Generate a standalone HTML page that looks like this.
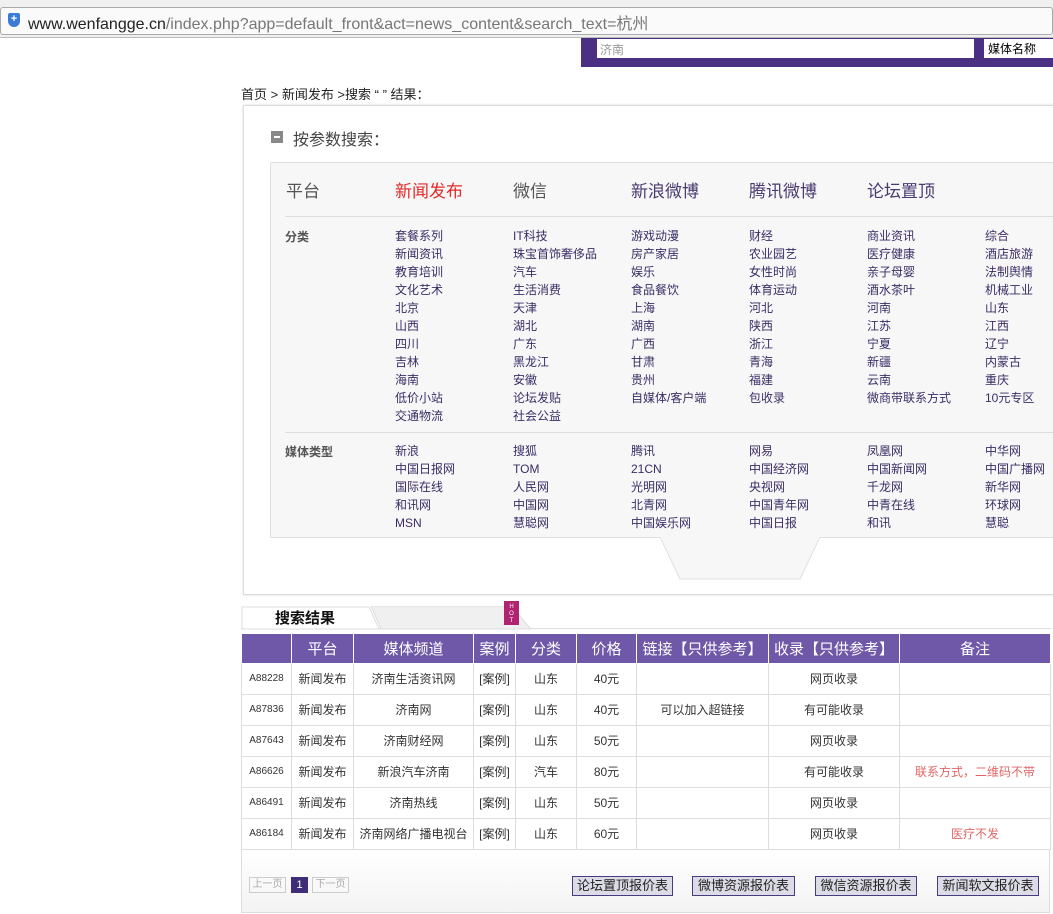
<!DOCTYPE html>
<html><head><meta charset="utf-8"><style>
*{margin:0;padding:0;box-sizing:border-box}
body{width:1053px;height:914px;overflow:hidden;background:#fff;font-family:"Liberation Sans","Noto Sans CJK SC",sans-serif;font-size:12px;color:#333;position:relative}
.a{position:absolute;white-space:nowrap}
.c{color:#3a2d66;font-size:12px}
table{border-collapse:collapse;position:absolute;left:241px;top:634px;width:809px;table-layout:fixed}
td,th{border:1px solid #ddd;text-align:center;font-weight:normal;height:31px;font-size:12px;color:#333;vertical-align:middle}
th{background:#6f58a8;color:#fff;font-size:15px;height:29px;border-color:#fff;border-top:none}
td.r{color:#e06666}
.btn{position:absolute;top:876px;height:20px;border:1px solid #4a3b80;background:#dcdce6;font-size:13px;text-align:center;line-height:18px;color:#222}
</style></head><body>
<div class="a" style="left:0;top:0;width:1053px;height:38px;background:#f0f0f0;border-bottom:1px solid #bbb"></div>
<div class="a" style="left:0;top:7px;width:1053px;height:28px;background:#fafafa;border:1px solid #aaa;border-radius:3px"></div>
<div class="a" style="left:8px;top:13px;width:12px;height:14px;background:#3a7bd5;border-radius:2px 2px 6px 6px;color:#fff;font-size:11px;line-height:13px;text-align:center;font-weight:bold">+</div>
<div class="a" style="left:28px;top:10px;font-size:16px;color:#222">www.wenfangge.cn<span style="color:#777">/index.php?app=default_front&amp;act=news_content&amp;search_text=杭州</span></div>
<div class="a" style="left:581px;top:38px;width:472px;height:29px;background:#4a2f82"></div>
<div class="a" style="left:597px;top:39px;width:377px;height:19px;background:#fff;color:#999;font-size:12px;padding:2px 3px">济南</div>
<div class="a" style="left:984px;top:39px;width:69px;height:19px;background:#fff;color:#000;font-size:12px;padding:1px 4px">媒体名称</div>
<div class="a" style="left:241px;top:84px;font-size:13px;color:#222">首页 &gt; 新闻发布 &gt;搜索 “ ” 结果：</div>
<div class="a" style="left:243px;top:105px;width:812px;height:490px;border:1px solid #ddd;box-shadow:0 0 3px #ddd"></div>
<div class="a" style="left:271px;top:131px;width:12px;height:12px;background:#888"><div style="margin:5px 3px;width:6px;height:2px;background:#fff"></div></div>
<div class="a" style="left:293px;top:126px;font-size:16px;color:#444">按参数搜索：</div>
<div class="a" style="left:270px;top:162px;width:785px;height:376px;background:#f7f7f7;border:1px solid #e0e0e0;border-right:none"></div>
<svg class="a" style="left:660px;top:537px" width="160" height="45"><polygon points="0,0 160,0 140,42 20,42" fill="#f7f7f7" stroke="#e0e0e0"/><rect x="1" y="0" width="158" height="2" fill="#f7f7f7"/></svg>
<div class="a" style="left:286px;top:177px;font-size:17px;color:#555">平台</div>
<div class="a" style="left:395px;top:177px;font-size:17px;color:#e02a2a">新闻发布</div>
<div class="a" style="left:513px;top:177px;font-size:17px;color:#555">微信</div>
<div class="a" style="left:631px;top:177px;font-size:17px;color:#4a3a70">新浪微博</div>
<div class="a" style="left:749px;top:177px;font-size:17px;color:#4a3a70">腾讯微博</div>
<div class="a" style="left:867px;top:177px;font-size:17px;color:#4a3a70">论坛置顶</div>
<div class="a" style="left:285px;top:216px;width:768px;height:1px;background:#ddd"></div>
<div class="a" style="left:285px;top:432px;width:768px;height:1px;background:#ddd"></div>
<div class="a" style="left:285px;top:228px;font-weight:bold;color:#555">分类</div>
<div class="a" style="left:285px;top:443px;font-weight:bold;color:#555">媒体类型</div>
<div class="a c" style="left:395px;top:227px;line-height:18px;white-space:pre">套餐系列
新闻资讯
教育培训
文化艺术
北京
山西
四川
吉林
海南
低价小站
交通物流</div>
<div class="a c" style="left:513px;top:227px;line-height:18px;white-space:pre">IT科技
珠宝首饰奢侈品
汽车
生活消费
天津
湖北
广东
黑龙江
安徽
论坛发贴
社会公益</div>
<div class="a c" style="left:631px;top:227px;line-height:18px;white-space:pre">游戏动漫
房产家居
娱乐
食品餐饮
上海
湖南
广西
甘肃
贵州
自媒体/客户端</div>
<div class="a c" style="left:749px;top:227px;line-height:18px;white-space:pre">财经
农业园艺
女性时尚
体育运动
河北
陕西
浙江
青海
福建
包收录</div>
<div class="a c" style="left:867px;top:227px;line-height:18px;white-space:pre">商业资讯
医疗健康
亲子母婴
酒水茶叶
河南
江苏
宁夏
新疆
云南
微商带联系方式</div>
<div class="a c" style="left:985px;top:227px;line-height:18px;white-space:pre">综合
酒店旅游
法制舆情
机械工业
山东
江西
辽宁
内蒙古
重庆
10元专区</div>
<div class="a c" style="left:395px;top:442px;line-height:18px;white-space:pre">新浪
中国日报网
国际在线
和讯网
MSN</div>
<div class="a c" style="left:513px;top:442px;line-height:18px;white-space:pre">搜狐
TOM
人民网
中国网
慧聪网</div>
<div class="a c" style="left:631px;top:442px;line-height:18px;white-space:pre">腾讯
21CN
光明网
北青网
中国娱乐网</div>
<div class="a c" style="left:749px;top:442px;line-height:18px;white-space:pre">网易
中国经济网
央视网
中国青年网
中国日报</div>
<div class="a c" style="left:867px;top:442px;line-height:18px;white-space:pre">凤凰网
中国新闻网
千龙网
中青在线
和讯</div>
<div class="a c" style="left:985px;top:442px;line-height:18px;white-space:pre">中华网
中国广播网
新华网
环球网
慧聪</div>
<div class="a" style="left:241px;top:628px;width:810px;height:1px;background:#ddd"></div>
<svg class="a" style="left:241px;top:606px" width="290" height="24"><polygon points="130,0 270,0 290,23 140,23" fill="#f0f0f0" stroke="#ddd"/><polygon points="1,23 1,1 128,1 138,23" fill="#fff" stroke="#ddd"/></svg>
<div class="a" style="left:275px;top:607px;font-size:15px;font-weight:bold;color:#111">搜索结果</div>
<div class="a" style="left:504px;top:601px;width:15px;height:24px;background:#b0236e;color:#fff;font-size:6px;text-align:center;line-height:7px;padding-top:3px">H<br>O<br>T</div>
<table>
<colgroup><col style="width:50px"><col style="width:62px"><col style="width:120px"><col style="width:42px"><col style="width:61px"><col style="width:60px"><col style="width:132px"><col style="width:131px"><col style="width:151px"></colgroup>
<tr><th></th><th>平台</th><th>媒体频道</th><th>案例</th><th>分类</th><th>价格</th><th>链接【只供参考】</th><th>收录【只供参考】</th><th>备注</th></tr>
<tr><td style="font-size:10px">A88228</td><td>新闻发布</td><td>济南生活资讯网</td><td>[案例]</td><td>山东</td><td>40元</td><td></td><td>网页收录</td><td></td></tr>
<tr><td style="font-size:10px">A87836</td><td>新闻发布</td><td>济南网</td><td>[案例]</td><td>山东</td><td>40元</td><td>可以加入超链接</td><td>有可能收录</td><td></td></tr>
<tr><td style="font-size:10px">A87643</td><td>新闻发布</td><td>济南财经网</td><td>[案例]</td><td>山东</td><td>50元</td><td></td><td>网页收录</td><td></td></tr>
<tr><td style="font-size:10px">A86626</td><td>新闻发布</td><td>新浪汽车济南</td><td>[案例]</td><td>汽车</td><td>80元</td><td></td><td>有可能收录</td><td class="r">联系方式，二维码不带</td></tr>
<tr><td style="font-size:10px">A86491</td><td>新闻发布</td><td>济南热线</td><td>[案例]</td><td>山东</td><td>50元</td><td></td><td>网页收录</td><td></td></tr>
<tr><td style="font-size:10px">A86184</td><td>新闻发布</td><td>济南网络广播电视台</td><td>[案例]</td><td>山东</td><td>60元</td><td></td><td>网页收录</td><td class="r">医疗不发</td></tr>
</table>
<div class="a" style="left:241px;top:850px;width:809px;height:63px;background:linear-gradient(#fff,#f3f3f3);border:1px solid #ddd;border-top:none"></div>
<div class="a" style="left:249px;top:877px;width:37px;height:16px;border:1px solid #ccc;color:#aaa;font-size:10px;text-align:center;line-height:14px">上一页</div>
<div class="a" style="left:291px;top:877px;width:17px;height:16px;background:#3f2d78;color:#fff;font-size:11px;text-align:center;line-height:16px">1</div>
<div class="a" style="left:312px;top:877px;width:37px;height:16px;border:1px solid #ccc;color:#aaa;font-size:10px;text-align:center;line-height:14px">下一页</div>
<div class="btn" style="left:572px;width:101px">论坛置顶报价表</div>
<div class="btn" style="left:692px;width:103px">微博资源报价表</div>
<div class="btn" style="left:815px;width:102px">微信资源报价表</div>
<div class="btn" style="left:937px;width:102px">新闻软文报价表</div>
</body></html>
